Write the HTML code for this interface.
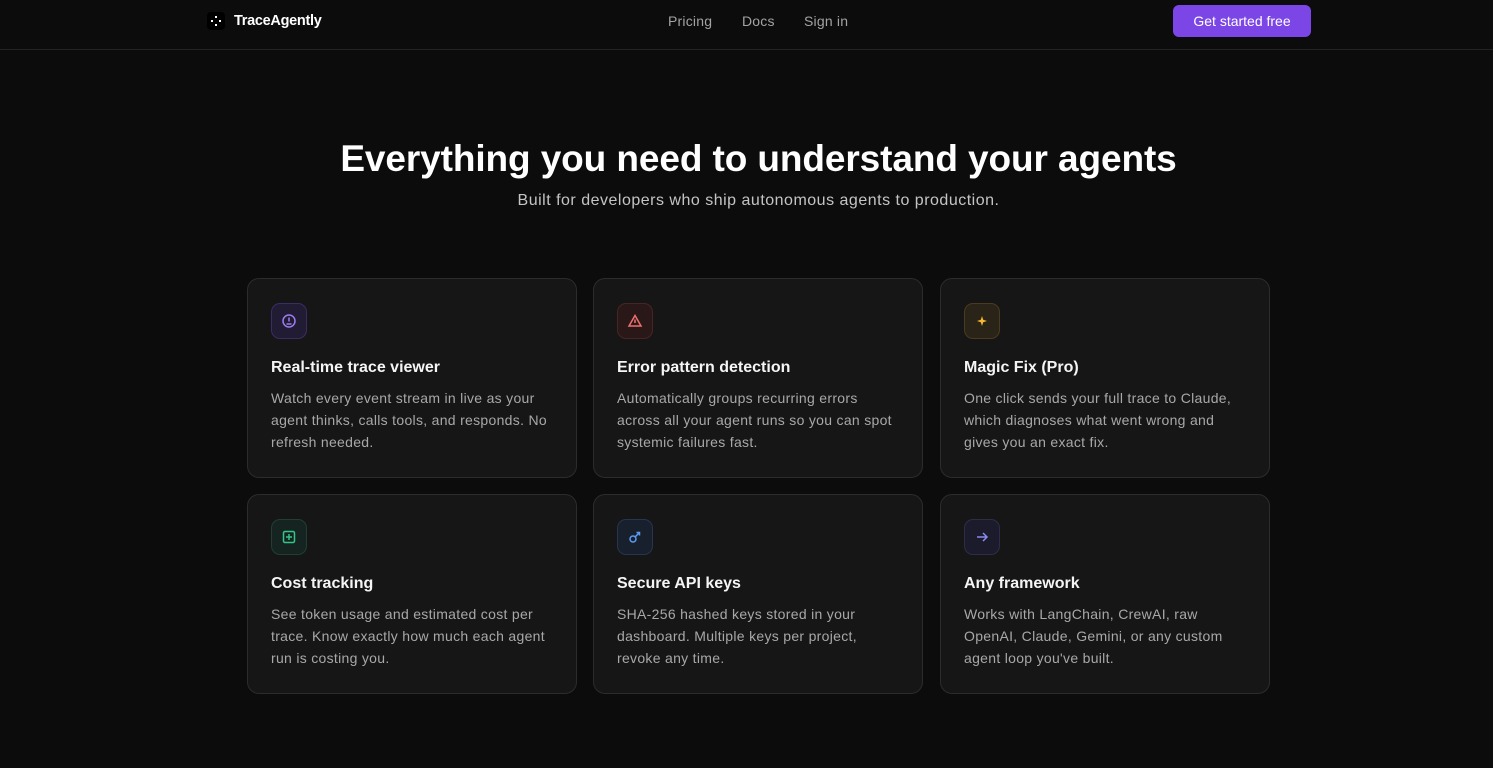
<!DOCTYPE html>
<html><head><meta charset="utf-8"><style>
*{box-sizing:border-box;margin:0;padding:0}
body{width:1493px;height:768px;background:#0c0c0c;font-family:"Liberation Sans",sans-serif;color:#fff;overflow:hidden;position:relative}
.hdr{position:absolute;left:0;top:0;width:1493px;height:50px;border-bottom:1px solid #232323}
.logo{position:absolute;left:207px;top:12px;width:18px;height:18px;background:#000;border-radius:4px}
.brand{position:absolute;left:234px;top:13px;font-size:14.5px;font-weight:bold;letter-spacing:-0.3px}
.nav a{position:absolute;top:13px;font-size:14px;color:#a3a3a3;text-decoration:none;letter-spacing:0.2px}
.btn{position:absolute;left:1173px;top:5px;width:138px;height:32px;background:#7c45e6;border-radius:6px;font-size:14px;color:#fff;text-align:center;line-height:32px}
h1{position:absolute;left:12px;width:1493px;top:138px;text-align:center;font-size:37px;font-weight:bold;letter-spacing:-0.1px}
.sub{position:absolute;left:12px;width:1493px;top:192px;text-align:center;font-size:16px;color:#c4c4c4;letter-spacing:0.5px}
.card{position:absolute;width:330px;height:200px;background:#161616;border:1px solid #2c2c2c;border-radius:12px;padding:24px 23px}
.ic{width:36px;height:36px;border-radius:9px;border:1px solid;display:flex;align-items:center;justify-content:center}
.card h3{margin-top:20px;font-size:16px;font-weight:bold;color:#f5f5f5}
.card p{margin-top:10px;font-size:14px;line-height:22px;color:#a8a8a8;letter-spacing:0.3px}
</style></head><body>
<div class="hdr">
<div class="logo"><svg width="18" height="18" viewBox="0 0 18 18" fill="#fff"><rect x="8" y="4" width="2" height="2"/><rect x="8" y="12" width="2" height="2"/><rect x="4" y="8" width="2" height="2"/><rect x="12" y="8" width="2" height="2"/></svg></div>
<div class="brand">TraceAgently</div>
<div class="nav"><a style="left:668px">Pricing</a><a style="left:742px">Docs</a><a style="left:804px">Sign in</a></div>
<div class="btn">Get started free</div>
</div>
<h1>Everything you need to understand your agents</h1>
<div class="sub">Built for developers who ship autonomous agents to production.</div>

<div class="card" style="left:247px;top:278px"><div class="ic" style="background:#211b33;border-color:#3b2d63"><svg width="16" height="16" viewBox="0 0 16 16" fill="none" stroke="#9d7cf0" stroke-width="1.5"><circle cx="8" cy="8" r="6"/><path d="M8 4.5v4M5.5 11h5"/></svg></div><h3>Real-time trace viewer</h3><p>Watch every event stream in live as your agent thinks, calls tools, and responds. No refresh needed.</p></div>
<div class="card" style="left:593px;top:278px"><div class="ic" style="background:#2a1818;border-color:#4a2424"><svg width="16" height="16" viewBox="0 0 16 16" fill="none" stroke="#f07070" stroke-width="1.5"><path d="M8 2.5L14 13H2Z"/><path d="M8 6.5v3.5"/></svg></div><h3>Error pattern detection</h3><p>Automatically groups recurring errors across all your agent runs so you can spot systemic failures fast.</p></div>
<div class="card" style="left:940px;top:278px"><div class="ic" style="background:#2a2418;border-color:#4a3a1e"><svg width="16" height="16" viewBox="0 0 16 16" fill="#f5b82e"><path d="M8 3L9.2 6.8 13 8 9.2 9.2 8 13 6.8 9.2 3 8 6.8 6.8Z"/></svg></div><h3>Magic Fix (Pro)</h3><p>One click sends your full trace to Claude, which diagnoses what went wrong and gives you an exact fix.</p></div>
<div class="card" style="left:247px;top:494px"><div class="ic" style="background:#152420;border-color:#1f3f33"><svg width="16" height="16" viewBox="0 0 16 16" fill="none" stroke="#34c48a" stroke-width="1.5"><rect x="2.5" y="2.5" width="11" height="11" rx="1.5"/><path d="M8 5v6M5 8h6"/></svg></div><h3>Cost tracking</h3><p>See token usage and estimated cost per trace. Know exactly how much each agent run is costing you.</p></div>
<div class="card" style="left:593px;top:494px"><div class="ic" style="background:#17202c;border-color:#243650"><svg width="16" height="16" viewBox="0 0 16 16" fill="none" stroke="#5b9cf0" stroke-width="1.5"><circle cx="6" cy="10" r="3"/><path d="M8.2 7.8L12.5 3.5M9.5 3.5h3v3"/></svg></div><h3>Secure API keys</h3><p>SHA-256 hashed keys stored in your dashboard. Multiple keys per project, revoke any time.</p></div>
<div class="card" style="left:940px;top:494px"><div class="ic" style="background:#1b1b2c;border-color:#2d2d4a"><svg width="16" height="16" viewBox="0 0 16 16" fill="none" stroke="#8a8af0" stroke-width="1.5"><path d="M3 8h10M9 4l4 4-4 4"/></svg></div><h3>Any framework</h3><p>Works with LangChain, CrewAI, raw OpenAI, Claude, Gemini, or any custom agent loop you've built.</p></div>
</body></html>
